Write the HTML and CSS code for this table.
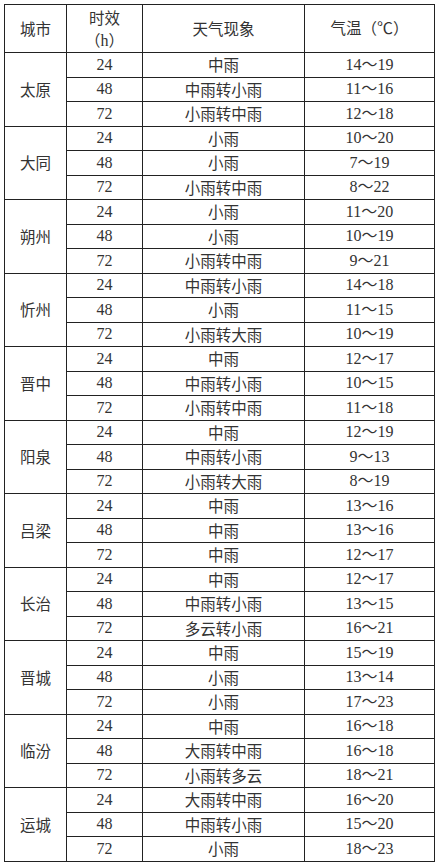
FILE: index.html
```html
<!DOCTYPE html>
<html lang="zh">
<head>
<meta charset="utf-8">
<link rel="stylesheet" href="styles.css">
</head>
<body>
<table class="fc">
<colgroup><col class="c1"><col class="c2"><col class="c3"><col class="c4"></colgroup>
<thead>
<tr class="hd"><th>城市</th><th><span class="ln">时效</span><span class="ln">（<span class="num">h</span>）</span></th><th>天气现象</th><th>气温（<span class="num">℃</span>）</th></tr>
</thead>
<tbody>
<tr class="gs"><td rowspan="3" class="city">太原</td><td class="num">24</td><td>中雨</td><td class="num">14～19</td></tr>
<tr><td class="num">48</td><td>中雨转小雨</td><td class="num">11～16</td></tr>
<tr><td class="num">72</td><td>小雨转中雨</td><td class="num">12～18</td></tr>
<tr class="gs"><td rowspan="3" class="city">大同</td><td class="num">24</td><td>小雨</td><td class="num">10～20</td></tr>
<tr><td class="num">48</td><td>小雨</td><td class="num">7～19</td></tr>
<tr><td class="num">72</td><td>小雨转中雨</td><td class="num">8～22</td></tr>
<tr class="gs"><td rowspan="3" class="city">朔州</td><td class="num">24</td><td>小雨</td><td class="num">11～20</td></tr>
<tr><td class="num">48</td><td>小雨</td><td class="num">10～19</td></tr>
<tr><td class="num">72</td><td>小雨转中雨</td><td class="num">9～21</td></tr>
<tr class="gs"><td rowspan="3" class="city">忻州</td><td class="num">24</td><td>中雨转小雨</td><td class="num">14～18</td></tr>
<tr><td class="num">48</td><td>小雨</td><td class="num">11～15</td></tr>
<tr><td class="num">72</td><td>小雨转大雨</td><td class="num">10～19</td></tr>
<tr class="gs"><td rowspan="3" class="city">晋中</td><td class="num">24</td><td>中雨</td><td class="num">12～17</td></tr>
<tr><td class="num">48</td><td>中雨转小雨</td><td class="num">10～15</td></tr>
<tr><td class="num">72</td><td>小雨转中雨</td><td class="num">11～18</td></tr>
<tr class="gs"><td rowspan="3" class="city">阳泉</td><td class="num">24</td><td>中雨</td><td class="num">12～19</td></tr>
<tr><td class="num">48</td><td>中雨转小雨</td><td class="num">9～13</td></tr>
<tr><td class="num">72</td><td>小雨转大雨</td><td class="num">8～19</td></tr>
<tr class="gs"><td rowspan="3" class="city">吕梁</td><td class="num">24</td><td>中雨</td><td class="num">13～16</td></tr>
<tr><td class="num">48</td><td>中雨</td><td class="num">13～16</td></tr>
<tr><td class="num">72</td><td>中雨</td><td class="num">12～17</td></tr>
<tr class="gs"><td rowspan="3" class="city">长治</td><td class="num">24</td><td>中雨</td><td class="num">12～17</td></tr>
<tr><td class="num">48</td><td>中雨转小雨</td><td class="num">13～15</td></tr>
<tr><td class="num">72</td><td>多云转小雨</td><td class="num">16～21</td></tr>
<tr class="gs"><td rowspan="3" class="city">晋城</td><td class="num">24</td><td>中雨</td><td class="num">15～19</td></tr>
<tr><td class="num">48</td><td>小雨</td><td class="num">13～14</td></tr>
<tr><td class="num">72</td><td>小雨</td><td class="num">17～23</td></tr>
<tr class="gs"><td rowspan="3" class="city">临汾</td><td class="num">24</td><td>中雨</td><td class="num">16～18</td></tr>
<tr><td class="num">48</td><td>大雨转中雨</td><td class="num">16～18</td></tr>
<tr><td class="num">72</td><td>小雨转多云</td><td class="num">18～21</td></tr>
<tr class="gs"><td rowspan="3" class="city">运城</td><td class="num">24</td><td>大雨转中雨</td><td class="num">16～20</td></tr>
<tr><td class="num">48</td><td>中雨转小雨</td><td class="num">15～20</td></tr>
<tr><td class="num">72</td><td>小雨</td><td class="num">18～23</td></tr>
</tbody>
</table>
</body>
</html>
```
FILE: styles.css
```css
html, body {
  margin: 0;
  padding: 0;
  background: #ffffff;
}
body {
  padding: 4px 0 0 4px;
}
.fc {
  border-collapse: collapse;
  table-layout: fixed;
  width: 430px;
  font-family: "Noto Sans CJK SC", "Noto Sans", sans-serif;
  font-size: 15.5px;
  color: #333333;
}
.c1 { width: 62px; }
.c2 { width: 76px; }
.c3 { width: 162px; }
.c4 { width: 130px; }
.fc th, .fc td {
  border: 1px solid #222222;
  padding: 0;
  text-align: center;
  vertical-align: middle;
  font-weight: 400;
  line-height: 1;
  white-space: nowrap;
}
.fc td {
  height: 23.5px;
}
.fc .hd th {
  height: 47px;
}
.ln {
  display: block;
  line-height: 22px;
}
.num {
  font-family: "Liberation Serif", "Noto Sans CJK SC", serif;
  font-size: 16px;
}
.city {
  font-size: 15.5px;
}
```
